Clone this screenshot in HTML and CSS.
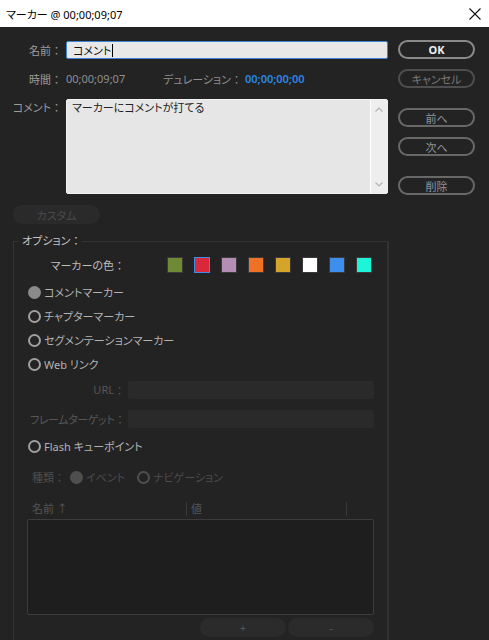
FILE: index.html
```html
<!DOCTYPE html>
<html lang="ja">
<head>
<meta charset="utf-8">
<title>マーカー</title>
<link rel="stylesheet" href="styles.css">
</head>
<body>
<header class="titlebar">
  <span class="title">マーカー @ 00;00;09;07</span>
  <svg class="close" width="12" height="12" viewBox="0 0 12 12"><path d="M0.5 0.5L11.5 11.5M11.5 0.5L0.5 11.5" stroke="#111" stroke-width="1.1" fill="none"/></svg>
</header>
<main class="content">
  <div class="top">
    <div class="fields">
      <div class="row row-name">
        <span class="lbl">名前<span class="c">：</span></span>
        <div class="name-input">コメント<span class="caret"></span></div>
      </div>
      <div class="row row-time">
        <span class="lbl">時間<span class="c">：</span></span>
        <span class="val">00;00;09;07</span>
        <span class="dur-lbl">デュレーション<span class="c">：</span></span>
        <span class="val blue">00;00;00;00</span>
      </div>
      <div class="row row-comment">
        <span class="lbl">コメント<span class="c">：</span></span>
        <div class="textarea">
          <div class="ta-text">マーカーにコメントが打てる</div>
          <div class="scroll">
            <svg width="8" height="5" viewBox="0 0 8 5"><path d="M0.5 4.5L4 1L7.5 4.5" stroke="#b4b4b4" stroke-width="1.2" fill="none"/></svg>
            <svg width="8" height="5" viewBox="0 0 8 5"><path d="M0.5 0.5L4 4L7.5 0.5" stroke="#b4b4b4" stroke-width="1.2" fill="none"/></svg>
          </div>
        </div>
      </div>
    </div>
    <div class="buttons">
      <button class="btn ok">OK</button>
      <button class="btn cancel">キャンセル</button>
      <button class="btn gap">前へ</button>
      <button class="btn">次へ</button>
      <button class="btn gap">削除</button>
    </div>
  </div>
  <button class="custom">カスタム</button>
  <fieldset class="options">
    <legend>オプション<span class="c">：</span></legend>
    <div class="opt-body">
      <div class="color-row">
        <span class="flbl bright">マーカーの色<span class="c">：</span></span>
        <div class="swatches">
          <span class="sw olive"></span>
          <span class="sw red"></span>
          <span class="sw purple"></span>
          <span class="sw orange"></span>
          <span class="sw yellow"></span>
          <span class="sw white"></span>
          <span class="sw blue-sw"></span>
          <span class="sw cyan"></span>
        </div>
      </div>
      <div class="radio-row first"><span class="radio on"></span>コメントマーカー</div>
      <div class="radio-row"><span class="radio"></span>チャプターマーカー</div>
      <div class="radio-row"><span class="radio"></span>セグメンテーションマーカー</div>
      <div class="radio-row"><span class="radio"></span>Web リンク</div>
      <div class="field-row url">
        <span class="flbl">URL<span class="c">：</span></span>
        <div class="dim-input"></div>
      </div>
      <div class="field-row frame">
        <span class="flbl tight">フレームターゲット<span class="c">：</span></span>
        <div class="dim-input"></div>
      </div>
      <div class="radio-row flash"><span class="radio"></span>Flash キューポイント</div>
      <div class="kind-row">
        <span class="kind-lbl">種類<span class="c">：</span></span>
        <span class="kind-opt event"><span class="radio dis on"></span>イベント</span>
        <span class="kind-opt"><span class="radio dis"></span>ナビゲーション</span>
      </div>
      <div class="table-head">
        <span class="th th1">名前 ↑</span>
        <span class="th th2">値</span>
      </div>
      <div class="table"></div>
      <div class="table-btns">
        <button class="tbtn">+</button>
        <button class="tbtn">-</button>
      </div>
    </div>
  </fieldset>
</main>
</body>
</html>
```
FILE: styles.css
```css
html, body {
  margin: 0;
  padding: 0;
}
body {
  width: 489px;
  height: 640px;
  overflow: hidden;
  background: #232323;
  font-family: "Noto Sans", "Noto Sans CJK JP", sans-serif;
  font-size: 11px;
  font-feature-settings: "palt";
  color: #999;
}
button {
  font: inherit;
  font-feature-settings: "palt";
  padding: 0;
  cursor: default;
}
.c {
  font-feature-settings: normal;
}

.titlebar {
  height: 27px;
  background: #ffffff;
  display: flex;
  align-items: center;
  justify-content: space-between;
  padding: 0 8px 0 6px;
}
.title {
  font-size: 11px;
  color: #000;
}

.content {
  padding-top: 14px;
}
.top {
  display: flex;
}
.fields {
  width: 388px;
  display: flex;
  flex-direction: column;
}
.row {
  display: flex;
  align-items: center;
}
.lbl {
  width: 62px;
  flex: none;
  text-align: right;
  margin-right: 4px;
  color: #9c9c9c;
}
.row-name {
  height: 18px;
}
.name-input {
  width: 322px;
  height: 18px;
  box-sizing: border-box;
  border: 1px solid #3a86dc;
  border-radius: 2px;
  background: #e8e8e8;
  color: #111;
  padding-left: 6px;
  display: flex;
  align-items: center;
}
.caret {
  width: 1px;
  height: 13px;
  background: #000;
  margin-left: 1px;
}
.row-time {
  margin-top: 10px;
  height: 19px;
}
.val {
  color: #8f8f8f;
}
.dur-lbl {
  margin-left: 38px;
  margin-right: 3px;
  color: #8f8f8f;
}
.val.blue {
  color: #2c86e6;
  font-weight: 600;
}
.row-comment {
  margin-top: 11px;
  align-items: flex-start;
}
.row-comment .lbl {
  line-height: 16px;
  margin-top: 1px;
}
.textarea {
  width: 322px;
  height: 95px;
  box-sizing: border-box;
  border: 1px solid #f2f2f2;
  border-radius: 2px;
  background: #e6e6e6;
  display: flex;
}
.ta-text {
  flex: 1;
  padding: 1px 5px;
  line-height: 14px;
  color: #222;
}
.scroll {
  width: 17px;
  border-left: 1px solid #ffffff;
  background: #eeeeee;
  display: flex;
  flex-direction: column;
  justify-content: space-between;
  align-items: center;
  padding: 7px 0 6px;
  box-sizing: border-box;
}

.buttons {
  margin-left: 10px;
  width: 77px;
  display: flex;
  flex-direction: column;
  gap: 10px;
}
.btn {
  width: 77px;
  height: 19px;
  box-sizing: border-box;
  border: 2px solid #686868;
  border-radius: 10px;
  background: transparent;
  color: #8e959d;
  display: flex;
  align-items: center;
  justify-content: center;
}
.btn.ok {
  margin-top: -1px;
  border-color: #8a8a8a;
  color: #eeeeee;
  font-weight: 700;
}
.btn.cancel {
  border-color: #4e4e4e;
  color: #7a7a7a;
}
.btn.gap {
  margin-top: 10px;
}

.custom {
  display: block;
  margin: 10px 0 0 13px;
  width: 87px;
  height: 19px;
  border: none;
  border-radius: 10px;
  background: #2a2a2a;
  color: #4a4a4a;
}

.options {
  margin: 9px 0 0 13px;
  padding: 0;
  width: 376px;
  box-sizing: border-box;
  border: 1px solid #333333;
  border-right-width: 2px;
  border-bottom: none;
  min-width: 0;
}
.options legend {
  margin-left: 5px;
  padding: 0 1px 0 3px;
  line-height: 16px;
  color: #c4c4c4;
}
.opt-body {
  padding: 0 0 20px 14px;
}
.color-row {
  margin-top: 8px;
  height: 16px;
  display: flex;
  align-items: center;
}
.flbl {
  width: 97px;
  flex: none;
  display: flex;
  justify-content: flex-end;
  white-space: nowrap;
  margin-right: 3px;
  color: #575757;
}
.flbl.tight {
  letter-spacing: -0.4px;
}
.flbl.bright {
  color: #bdbdbd;
}
.swatches {
  display: flex;
  gap: 11px;
  margin-left: 39px;
}
.sw {
  width: 16px;
  height: 16px;
  box-sizing: border-box;
  border: 1px solid #3a3a3a;
}
.olive { background: #6f8a37; }
.red { background: #d8283a; border-color: #3e8ee8; }
.purple { background: #b48db5; }
.orange { background: #ee7125; }
.yellow { background: #d5a42b; }
.white { background: #ffffff; }
.blue-sw { background: #3e8ef0; }
.cyan { background: #1ef5d8; }

.radio-row {
  display: flex;
  align-items: center;
  height: 16px;
  margin-top: 8px;
  color: #b3b3b3;
}
.radio-row.first {
  margin-top: 11px;
}
.radio {
  width: 13px;
  height: 13px;
  flex: none;
  box-sizing: border-box;
  border: 2px solid #a0a0a0;
  border-radius: 50%;
  margin-right: 3px;
}
.radio.on {
  background: #8a8a8a;
  border-color: #8a8a8a;
}
.radio.dis {
  border-color: #4f4f4f;
}
.radio.dis.on {
  background: #4f4f4f;
}

.field-row {
  display: flex;
  align-items: center;
  height: 18px;
}
.field-row.url {
  margin-top: 9px;
}
.field-row.frame {
  margin-top: 11px;
}
.dim-input {
  width: 246px;
  height: 18px;
  background: #2a2a2a;
  border-radius: 2px;
}
.radio-row.flash {
  margin-top: 10px;
}

.kind-row {
  margin-top: 15px;
  height: 16px;
  display: flex;
  align-items: center;
  color: #4d4d4d;
}
.kind-lbl {
  width: 38px;
  margin-left: 4px;
  flex: none;
}
.kind-opt {
  display: flex;
  align-items: center;
}
.kind-opt.event {
  width: 67px;
}

.table-head {
  margin-top: 17px;
  margin-left: -1px;
  height: 14px;
  width: 347px;
  display: flex;
  align-items: center;
  color: #555555;
}
.th {
  height: 14px;
  line-height: 14px;
  box-sizing: border-box;
  border-right: 1px solid #393939;
}
.th1 {
  width: 160px;
  padding-left: 5px;
}
.th2 {
  width: 160px;
  padding-left: 4px;
}
.table {
  margin-top: 3px;
  margin-left: -1px;
  width: 347px;
  height: 96px;
  box-sizing: border-box;
  border: 1px solid #3c3c3c;
  border-radius: 2px;
  background: #1e1e1e;
}
.table-btns {
  margin-top: 3px;
  width: 346px;
  display: flex;
  justify-content: flex-end;
  gap: 2px;
}
.tbtn {
  width: 86px;
  height: 19px;
  border: none;
  border-radius: 10px;
  background: #2b2b2b;
  color: #555555;
}
```
